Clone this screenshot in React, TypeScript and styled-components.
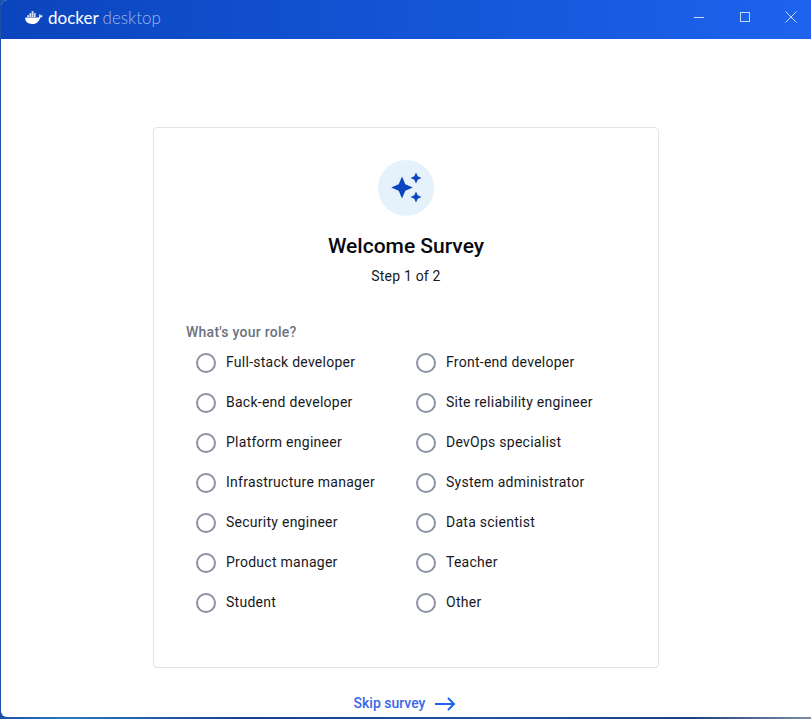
import React from "react";
import styled, { createGlobalStyle } from "styled-components";

const Global = createGlobalStyle`
  html, body { margin: 0; padding: 0; height: 100%; overflow: hidden; background: #fff; }
  #root { height: 100%; }
  * { box-sizing: border-box; }
`;

const Desktop = styled.div`
  width: 811px;
  height: 719px;
  padding: 0 0 2px 1px;
  background: linear-gradient(90deg, #1c4fa8 0%, #2b78c0 8%, #1a3f8f 30%, #20509f 60%, #1d3f80 85%, #7d8ea5 100%);
  overflow: hidden;
`;

const Win = styled.div`
  height: 100%;
  display: flex;
  flex-direction: column;
  background: #fff;
  border-radius: 6px 0 0 6px;
  overflow: hidden;
`;

const TitleBar = styled.header`
  flex: none;
  height: 39px;
  display: flex;
  align-items: center;
  justify-content: space-between;
  padding-left: 24px;
  background: linear-gradient(90deg, #0b45bd 0%, #1d63ed 100%);
`;

const Brand = styled.div`
  display: flex;
  align-items: center;
  gap: 5px;
  padding-bottom: 3px;
  font-family: "Lato", sans-serif;
  font-size: 17px;
  line-height: 20px;
  color: #fff;
`;

const BrandStrong = styled.span`
  font-weight: 400;
`;

const BrandLight = styled.span`
  font-weight: 300;
  margin-left: -1px;
  color: #9db8ee;
`;

const WinControls = styled.div`
  display: flex;
  align-items: center;
  height: 100%;
  margin-right: -3px;
`;

const WinButton = styled.div`
  width: 46px;
  height: 39px;
  padding-bottom: 5px;
  display: flex;
  align-items: center;
  justify-content: center;
  color: #c9d8f8;
`;

const Main = styled.main`
  flex: 1;
  min-height: 0;
  display: flex;
  flex-direction: column;
  align-items: center;
  padding-top: 88px;
`;

const Card = styled.section`
  flex: none;
  width: 506px;
  height: 541px;
  padding: 32px 31px 0 32px;
  display: flex;
  flex-direction: column;
  background: #fff;
  border: 1px solid #e1e2e6;
  border-radius: 4px;
`;

const IconDisc = styled.div`
  align-self: center;
  width: 56px;
  height: 56px;
  margin-left: -1px;
  border-radius: 50%;
  background: #e5f2fc;
  display: flex;
  align-items: center;
  justify-content: center;
`;

const Title = styled.h1`
  margin: 18px 0 0 -1px;
  text-align: center;
  font-family: "Roboto", sans-serif;
  font-size: 21px;
  line-height: 24px;
  font-weight: 500;
  color: #0a0a0f;
`;

const Step = styled.p`
  margin: 8px 0 0 -1px;
  text-align: center;
  font-family: "Roboto", sans-serif;
  font-size: 14px;
  line-height: 20px;
  letter-spacing: 0.2px;
  color: #17191e;
`;

const Legend = styled.div`
  margin-top: 36px;
  font-family: "Roboto", sans-serif;
  font-size: 14px;
  line-height: 20px;
  font-weight: 500;
  letter-spacing: 0.25px;
  color: #6c7280;
`;

const Options = styled.div`
  padding-left: 10px;
  display: grid;
  grid-template-columns: 220px 220px;
  grid-auto-rows: 40px;
`;

const Option = styled.label`
  display: flex;
  align-items: center;
  gap: 10px;
  font-family: "Roboto", sans-serif;
  font-size: 14px;
  letter-spacing: 0.26px;
  color: #17191e;
`;

const Radio = styled.span`
  flex: none;
  width: 20px;
  height: 20px;
  margin-top: 2px;
  border: 2px solid #8b90a3;
  border-radius: 50%;
`;

const Skip = styled.a`
  margin: 25px 2px 0 0;
  display: flex;
  align-items: center;
  gap: 9px;
  font-family: "Roboto", sans-serif;
  font-size: 14px;
  line-height: 20px;
  font-weight: 500;
  color: #3a68ea;
`;

const SkipArrow = styled.svg`
  margin-top: 2px;
`;

const left = ["Full-stack developer", "Back-end developer", "Platform engineer", "Infrastructure manager", "Security engineer", "Product manager", "Student"];
const right = ["Front-end developer", "Site reliability engineer", "DevOps specialist", "System administrator", "Data scientist", "Teacher", "Other"];
const roles = left.flatMap((l, i) => [l, right[i]]);

const Whale = () => (
  <svg width="18" height="13.500" viewBox="0 0 20 15" fill="#fff">
    <path d="M0.3 7.2h15.2c.4-1 .5-2.1.1-3 .7-.6 1.5-.7 1.5-.7s.2 1.1.2 1.4c.9-.1 1.8 0 2.5.5-.6 1.3-1.8 2-3 2C15.5 11.700 12.500 14.500 8 14.500 2.500 14.500 -.2 11.500.3 7.200z" />
    <rect x="2.600" y="4.700" width="2" height="1.800" />
    <rect x="5" y="4.700" width="2" height="1.800" />
    <rect x="7.400" y="4.700" width="2" height="1.800" />
    <rect x="9.800" y="4.700" width="2" height="1.800" />
    <rect x="5" y="2.500" width="2" height="1.800" />
    <rect x="7.400" y="2.500" width="2" height="1.800" />
    <rect x="9.800" y="2.500" width="2" height="1.800" />
    <rect x="7.400" y="0.300" width="2" height="1.800" />
  </svg>
);

const Sparkles = () => (
  <svg width="32" height="32" viewBox="0 0 32 32" fill="#0b46c0">
    <path d="M12 4.500 15.300 12.200 22.800 15.500 15.300 18.800 12 26.500 8.700 18.800 1.200 15.500 8.700 12.200Z" />
    <path d="M26 .5 27.700 4.300 31.500 6 27.700 7.700 26 11.500 24.300 7.700 20.500 6 24.300 4.300Z" />
    <path d="M26 19.500 27.700 23.300 31.500 25 27.700 26.700 26 30.500 24.300 26.700 20.500 25 24.300 23.300Z" />
  </svg>
);

export default function App() {
  return (
    <Desktop>
      <Global />
      <Win>
        <TitleBar>
          <Brand>
            <Whale />
            <BrandStrong>docker</BrandStrong>
            <BrandLight>desktop</BrandLight>
          </Brand>
          <WinControls>
            <WinButton>
              <svg width="10" height="10" viewBox="0 0 10 10" stroke="currentColor" strokeWidth="1"><path d="M0 5.500h10" /></svg>
            </WinButton>
            <WinButton>
              <svg width="10" height="10" viewBox="0 0 10 10" fill="none" stroke="currentColor" strokeWidth="1"><rect x=".5" y=".5" width="9" height="9" /></svg>
            </WinButton>
            <WinButton>
              <svg width="12" height="12" viewBox="0 0 12 12" stroke="currentColor" strokeWidth="1"><path d="M.5.5l11 11M11.500.5l-11 11" /></svg>
            </WinButton>
          </WinControls>
        </TitleBar>
        <Main>
          <Card>
            <IconDisc><Sparkles /></IconDisc>
            <Title>Welcome Survey</Title>
            <Step>Step 1 of 2</Step>
            <Legend>What's your role?</Legend>
            <Options>
              {roles.map((r) => (
                <Option key={r}><Radio />{r}</Option>
              ))}
            </Options>
          </Card>
          <Skip>
            Skip survey
            <SkipArrow width="22" height="14" viewBox="0 0 22 14" fill="none" stroke="#1d63ed" strokeWidth="2"><path d="M1 7h19M14 1l6 6-6 6" /></SkipArrow>
          </Skip>
        </Main>
      </Win>
    </Desktop>
  );
}
